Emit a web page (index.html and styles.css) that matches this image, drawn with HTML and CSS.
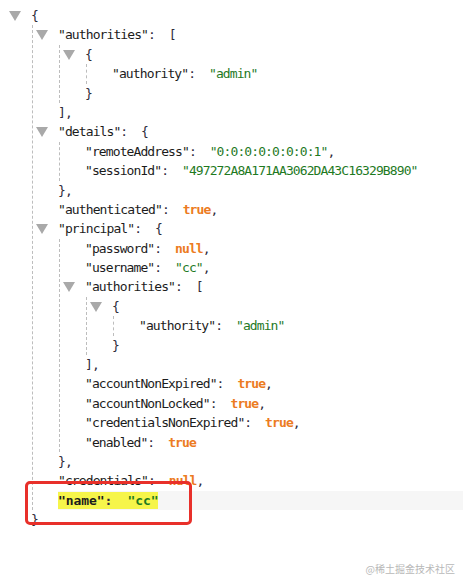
FILE: index.html
```html
<!DOCTYPE html>
<html lang="en">

<head>
    <meta charset="UTF-8">
    <title>JSON</title>
    <link rel="stylesheet" href="styles.css">
</head>

<body>
<div class="tree">
    <div class="line"><span class="tog"></span><span class="p">{</span></div>
    <div class="kids">
        <div class="line"><span class="tog"></span><span class="k">"authorities"</span><span class="p">:  [</span></div>
        <div class="kids">
            <div class="line"><span class="tog"></span><span class="p">{</span></div>
            <div class="kids">
                <div class="line"><span class="k">"authority"</span><span class="p">:  </span><span class="s">"admin"</span></div>
            </div>
            <div class="line"><span class="p">}</span></div>
        </div>
        <div class="line"><span class="p">],</span></div>
        <div class="line"><span class="tog"></span><span class="k">"details"</span><span class="p">:  {</span></div>
        <div class="kids">
            <div class="line"><span class="k">"remoteAddress"</span><span class="p">:  </span><span class="s">"0:0:0:0:0:0:0:1"</span><span class="p">,</span></div>
            <div class="line"><span class="k">"sessionId"</span><span class="p">:  </span><span class="s">"497272A8A171AA3062DA43C16329B890"</span></div>
        </div>
        <div class="line"><span class="p">},</span></div>
        <div class="line"><span class="k">"authenticated"</span><span class="p">:  </span><span class="b">true</span><span class="p">,</span></div>
        <div class="line"><span class="tog"></span><span class="k">"principal"</span><span class="p">:  {</span></div>
        <div class="kids">
            <div class="line"><span class="k">"password"</span><span class="p">:  </span><span class="b">null</span><span class="p">,</span></div>
            <div class="line"><span class="k">"username"</span><span class="p">:  </span><span class="s">"cc"</span><span class="p">,</span></div>
            <div class="line"><span class="tog"></span><span class="k">"authorities"</span><span class="p">:  [</span></div>
            <div class="kids">
                <div class="line"><span class="tog"></span><span class="p">{</span></div>
                <div class="kids">
                    <div class="line"><span class="k">"authority"</span><span class="p">:  </span><span class="s">"admin"</span></div>
                </div>
                <div class="line"><span class="p">}</span></div>
            </div>
            <div class="line"><span class="p">],</span></div>
            <div class="line"><span class="k">"accountNonExpired"</span><span class="p">:  </span><span class="b">true</span><span class="p">,</span></div>
            <div class="line"><span class="k">"accountNonLocked"</span><span class="p">:  </span><span class="b">true</span><span class="p">,</span></div>
            <div class="line"><span class="k">"credentialsNonExpired"</span><span class="p">:  </span><span class="b">true</span><span class="p">,</span></div>
            <div class="line"><span class="k">"enabled"</span><span class="p">:  </span><span class="b">true</span></div>
        </div>
        <div class="line"><span class="p">},</span></div>
        <div class="line"><span class="k">"credentials"</span><span class="p">:  </span><span class="b">null</span><span class="p">,</span></div>
        <div class="line hl"><span class="mark"><span class="k">"name"</span><span class="p">:  </span><span class="s">"cc"</span></span></div>
    </div>
    <div class="line"><span class="p">}</span></div>
    <div class="redbox"></div>
</div>
<div class="watermark">@稀土掘金技术社区</div>
</body>

</html>
```

FILE: styles.css
```css
body {
    margin: 0;
    background-color: white;
    height: 580px;
    position: relative;
    overflow: hidden;
}

.tree {
    position: relative;
    padding: 6px 0 0 31px;
    font-family: "DejaVu Sans Mono", monospace;
    font-size: 13px;
    letter-spacing: -0.9px;
    color: #1c1c1c;
}

.line {
    height: 19.4px;
    line-height: 19.4px;
    white-space: pre;
}

.kids {
    margin-left: 1px;
    border-left: 1px dashed #bdbdbd;
    padding-left: 25px;
}

.tog {
    display: inline-block;
    width: 0;
    height: 0;
    border-left: 6px solid transparent;
    border-right: 6px solid transparent;
    border-top: 10px solid #a9a9a9;
    margin-left: -22px;
    margin-right: 10px;
    vertical-align: -1px;
}

.p {
    color: #2e2a3a;
}

.s {
    color: #1f7a1f;
}

.b {
    color: #ec7b22;
    font-weight: bold;
}

.hl {
    background-color: #f6f6f6;
}

.hl .mark {
    background-color: #f6f54a;
    font-weight: bold;
    letter-spacing: -0.1px;
    padding: 1px 0;
}

.redbox {
    position: absolute;
    left: 25px;
    top: 481px;
    width: 161px;
    height: 38px;
    border: 3px solid #e8302a;
    border-radius: 5px;
}

.watermark {
    position: absolute;
    right: 8px;
    bottom: 4px;
    font-family: "Noto Sans CJK SC", sans-serif;
    font-size: 10px;
    color: #b8b8b8;
}
```
